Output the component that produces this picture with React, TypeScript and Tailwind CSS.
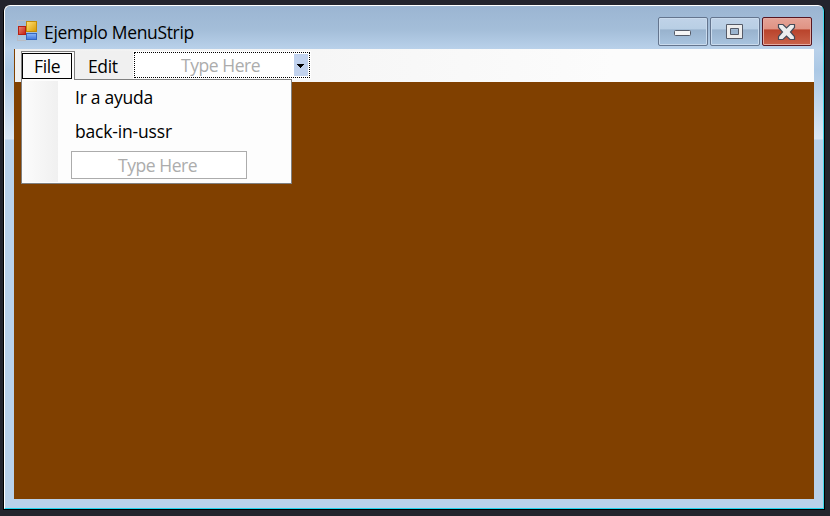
import React from 'react';

function AppIcon() {
  return (
    <svg width="21" height="21" viewBox="0 0 21 21" shapeRendering="crispEdges">
      <defs>
        <linearGradient id="yel" x1="0" y1="0" x2="1" y2="1"><stop offset="0" stopColor="#ffe27a" /><stop offset="1" stopColor="#d99a00" /></linearGradient>
        <linearGradient id="red" x1="0" y1="0" x2="1" y2="1"><stop offset="0" stopColor="#e98a78" /><stop offset="1" stopColor="#c41d10" /></linearGradient>
        <linearGradient id="blu" x1="0" y1="0" x2="0" y2="1"><stop offset="0" stopColor="#8db7fa" /><stop offset="1" stopColor="#3d76de" /></linearGradient>
      </defs>
      <path d="M.5 6V.5H9M.5 14v6.5H9" fill="none" stroke="#b9bcc4" />
      <rect x="9.5" y="1.5" width="10" height="10" fill="url(#yel)" stroke="#c18b08" />
      <rect x="1.5" y="6.5" width="7" height="8" fill="url(#red)" stroke="#b51f14" />
      <rect x="9.5" y="13.5" width="10" height="6" fill="url(#blu)" stroke="#3566bd" />
    </svg>
  );
}

const caption = 'flex h-[29px] w-[50px] items-center justify-center rounded-[2px] border ';
const blue = 'border-[#64758e] bg-[linear-gradient(#c0d3e8_0%,#b8cee4_42%,#98b2cd_43%,#a9c4df_100%)] shadow-[inset_0_0_0_1px_#cadbed]';

function TitleBar() {
  return (
    <header className="flex h-[43px] items-start pl-[12px] pr-[11px]">
      <div className="mt-[14px]"><AppIcon /></div>
      <h1 className="ml-[6px] mt-[14px] h-6 grow whitespace-nowrap text-[17.5px] leading-6 tracking-[-0.33px]">Ejemplo MenuStrip</h1>
      <div className="mt-[11px] flex gap-[2px]">
        <button className={caption + blue}>
          <svg width="18" height="8" className="mt-[3px]"><rect x=".5" y="1.5" width="16" height="5" rx="1" fill="#f5f5f5" stroke="#555b68" /></svg>
        </button>
        <button className={caption + blue}>
          <svg width="18" height="16"><path fillRule="evenodd" d="M.5.5h16v14h-16zM4.500 4.500h8v6h-8z" fill="#ededed" stroke="#555b68" /></svg>
        </button>
        <button className={caption + 'border-[#571620] bg-[linear-gradient(#e5a397_0%,#df9283_42%,#b9432b_43%,#c9634a_100%)] shadow-[inset_0_0_0_1px_#e5aaa0]'}>
          <svg width="20" height="18" viewBox="0 0 20 18"><path d="M1.500 1.500h4.500L9.500 5l3.500-3.500h4.500v3L13.500 9l4 4.500v3H13L9.500 13 6 16.500H1.500v-3L5.500 9l-4-4.500z" fill="#ededed" stroke="#454b58" strokeWidth="1.200" /></svg>
        </button>
      </div>
    </header>
  );
}

function MenuBar() {
  return (
    <nav className="ml-px flex h-[33px] bg-[linear-gradient(90deg,#f0f0f0,#fcfcfc_75%)] pl-[6px] pt-[2px]">
      <div className="relative z-20 h-[29px] w-[54px] border-x border-t border-[#808080] bg-[#fcfcfc] pt-px">
        <div className="h-[26px] w-[50px] border border-black pl-[11px] text-[17.5px] leading-[24px] tracking-[-0.4px]">File</div>
      </div>
      <div className="h-[28px] w-[59px] bg-[#f0f0f0] pl-[13px] text-[17.5px] leading-[30px] tracking-[-0.35px]">Edit</div>
      <div className="mt-px flex h-[26px] w-[176px] border border-dotted border-black bg-white p-px shadow-[0_0_0_1px_white]">
        <span className="w-[158px] pl-[45px] text-[17.5px] leading-[22px] tracking-[-0.46px] text-[#acacac]">Type Here</span>
        <span className="flex h-[22px] w-[14px] items-center justify-center bg-[#c1d2ee]">
          <svg width="7" height="4" className="mt-[2px] -ml-px" shapeRendering="crispEdges"><path d="M0 0h7L3.500 4z" /></svg>
        </span>
      </div>
    </nav>
  );
}

function Dropdown() {
  return (
    <div className="absolute left-[7px] top-[30px] z-10 flex h-[105px] w-[271px] border border-[#808080] bg-[#fdfdfd] py-px">
      <div className="w-[36px] bg-[linear-gradient(90deg,#fcfcfc,#f0f0f0)]" />
      <ul className="pl-[13px] text-[17.5px]">
        <li className="h-[34px] pl-1 leading-[32px] tracking-[-0.25px]">Ir a ayuda</li>
        <li className="h-[34px] pl-1 leading-[32px] tracking-[-0.17px]">back-in-ussr</li>
        <li className="mt-[2px] h-[28px] w-[176px] border border-[#acacac] bg-white pl-[46px] leading-[27px] tracking-[-0.46px] text-[#acacac]">Type Here</li>
      </ul>
    </div>
  );
}

export default function App() {
  return (
    <div className="h-[516px] w-[830px] overflow-hidden bg-[#23242d] pl-[3px] pt-[5px] font-['Open_Sans','Noto_Sans',sans-serif] text-black">
      <main className="h-[505px] w-[822px] rounded-t-[7px] border border-t-0 border-black">
        <div className="h-[504px] w-[820px] rounded-t-[6px] border border-b-[#1fd5ef] border-l-white border-r-[#42d5e9] border-t-white bg-[linear-gradient(#9bb5d2_0px,#a4bed9_24px,#b9d1ea_43px,#abc8e5_64px,#dce8f5_133px,#b9d1ea_134px)]">
          <TitleBar />
          <section className="relative ml-[9px] h-[450px] w-[800px] bg-[#804000]">
            <MenuBar />
            <Dropdown />
          </section>
        </div>
      </main>
    </div>
  );
}
